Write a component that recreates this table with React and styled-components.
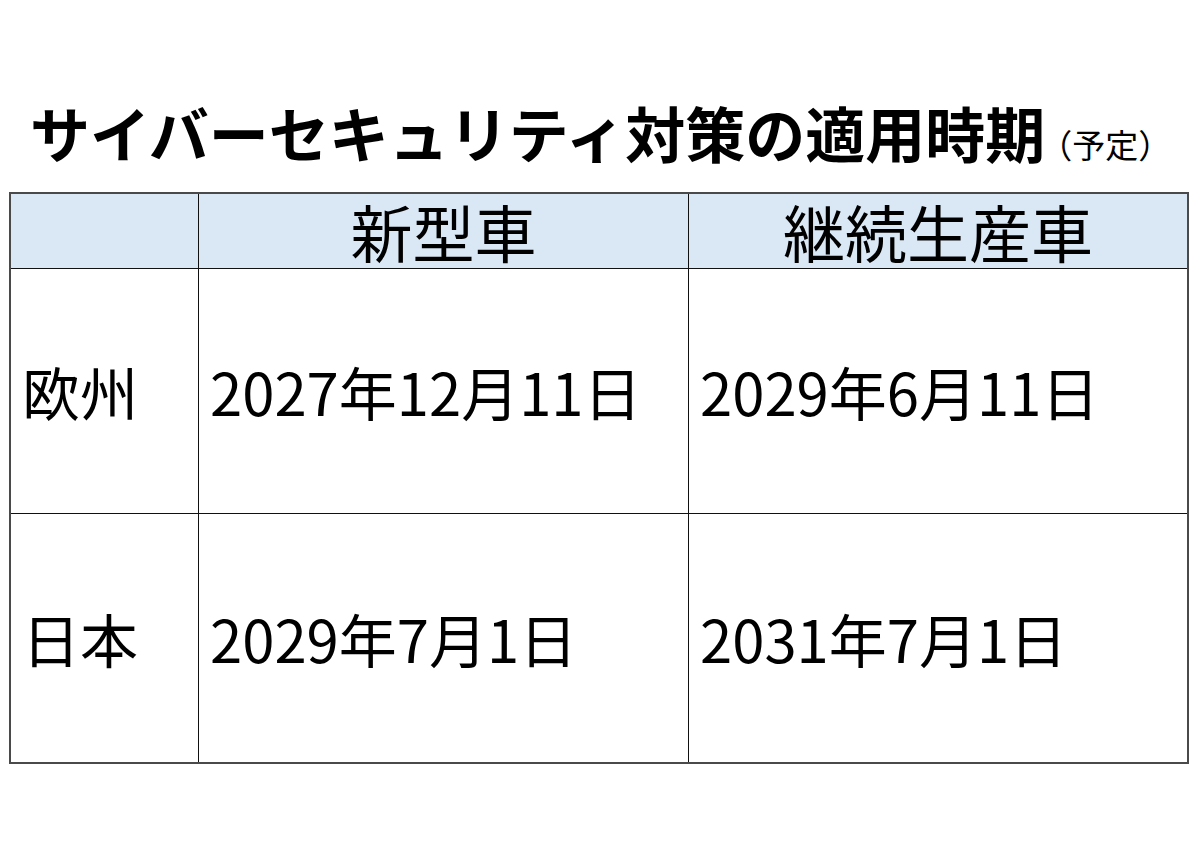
import styled, { createGlobalStyle } from "styled-components";

const GlobalStyle = createGlobalStyle`
  html, body {
    margin: 0;
    padding: 0;
    background: #ffffff;
  }
  body {
    font-family: "Noto Sans CJK JP", "Noto Sans", sans-serif;
    color: #000;
  }
`;

const rows = [
  { region: "欧州", newCar: "2027年12月11日", continued: "2029年6月11日" },
  { region: "日本", newCar: "2029年7月1日", continued: "2031年7月1日" },
];

export default function App() {
  return (
    <>
      <GlobalStyle />
      <Page>
        <Title>
          サイバーセキュリティ対策の適用時期
          <Note>（予定）</Note>
        </Title>
        <Table>
          <HeadCell />
          <HeadCell>新型車</HeadCell>
          <HeadCell>継続生産車</HeadCell>
          {rows.map((r) => (
            <Row key={r.region}>
              <Cell>{r.region}</Cell>
              <Cell>{r.newCar}</Cell>
              <Cell>{r.continued}</Cell>
            </Row>
          ))}
        </Table>
      </Page>
    </>
  );
}

const Page = styled.div`
  width: 1200px;
  height: 860px;
  padding-top: 102px;
  box-sizing: border-box;
`;

const Title = styled.h1`
  margin: 0 0 30px 30px;
  font-family: "Noto Sans CJK JP", sans-serif;
  font-weight: 700;
  font-size: 60px;
  line-height: 1;
  white-space: nowrap;
`;

const Note = styled.span`
  font-size: 33px;
  font-weight: 400;
  margin-left: -6px;
`;

const Table = styled.div`
  margin-left: 9px;
  width: 1180px;
  display: grid;
  grid-template-columns: 188px 490px 498px;
  grid-template-rows: 75px 245px 248px;
  border: 2px solid #4a4a4a;
  box-sizing: border-box;
`;

const Row = styled.div`
  display: contents;
`;

const HeadCell = styled.div`
  background: #dae8f5;
  border-right: 1px solid #111;
  border-bottom: 1px solid #111;
  display: flex;
  align-items: center;
  justify-content: center;
  font-size: 62px;
  line-height: 1;
  font-weight: 400;
  &:nth-child(3) {
    border-right: none;
  }
`;

const Cell = styled.div`
  border-right: 1px solid #111;
  border-bottom: 1px solid #111;
  display: flex;
  align-items: center;
  padding: 0 0 0 11px;
  font-size: 58px;
  line-height: 1;
  white-space: nowrap;
  ${Row}:last-child > & {
    border-bottom: none;
  }
  &:last-child {
    border-right: none;
  }
`;
